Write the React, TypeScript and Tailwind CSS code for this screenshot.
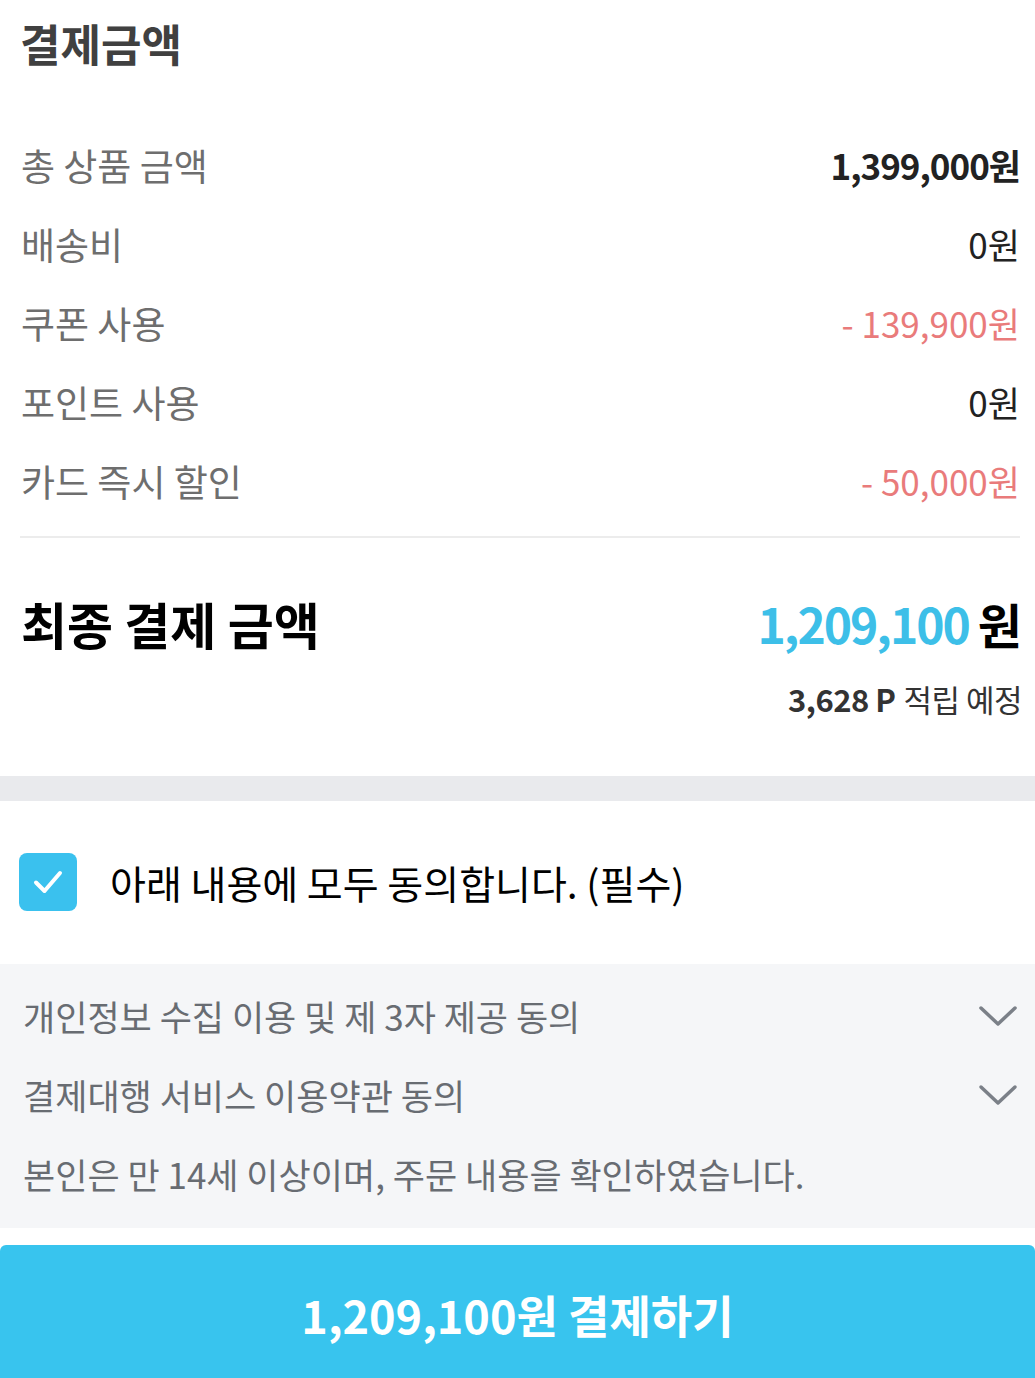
export default function App() {
  const rows: { label: string; value: string; tone: "bold" | "normal" | "red" }[] = [
    { label: "총 상품 금액", value: "1,399,000원", tone: "bold" },
    { label: "배송비", value: "0원", tone: "normal" },
    { label: "쿠폰 사용", value: "- 139,900원", tone: "red" },
    { label: "포인트 사용", value: "0원", tone: "normal" },
    { label: "카드 즉시 할인", value: "- 50,000원", tone: "red" },
  ];

  const agreements = [
    { text: "개인정보 수집 이용 및 제 3자 제공 동의", toggle: true },
    { text: "결제대행 서비스 이용약관 동의", toggle: true },
    { text: "본인은 만 14세 이상이며, 주문 내용을 확인하였습니다.", toggle: false },
  ];

  return (
    <div
      className="w-full bg-white"
      style={{ fontFamily: '"Noto Sans CJK KR", "Noto Sans", sans-serif' }}
    >
      {/* 결제금액 */}
      <section className="pl-[20px] pr-[15px]">
        <h2 className="h-[86px] flex items-center text-[44px] font-bold text-[#404040]">
          결제금액
        </h2>

        <div className="mt-[40px]">
          {rows.map((row) => (
            <div key={row.label} className="h-[79px] flex items-center justify-between">
              <span className="text-[37px] text-[#6e6e6e] pl-[1px]">{row.label}</span>
              <span
                className={
                  row.tone === "bold"
                    ? "text-[35px] font-bold text-[#222] tracking-[-1px]"
                    : row.tone === "red"
                    ? "text-[35px] text-[#e97b7b]"
                    : "text-[35px] text-[#222]"
                }
              >
                {row.value}
              </span>
            </div>
          ))}
        </div>

        <div className="mt-[15px] h-[2px] bg-[#ececec]" />

        <div className="mt-[50px] h-[70px] flex items-center justify-between">
          <span className="text-[50px] font-bold text-black pl-[1px]">최종 결제 금액</span>
          <span className="text-[48px] font-bold tracking-[-2px]">
            <span className="text-[#3dbfe8]">1,209,100</span>
            <span className="text-black"> 원</span>
          </span>
        </div>

        <div className="mt-[21px] -mr-[2px] h-[40px] flex items-center justify-end text-[31px] text-[#333] tracking-[-0.5px]">
          <span className="font-semibold">3,628 P</span>
          <span className="ml-[8px]">적립 예정</span>
        </div>
      </section>

      <div className="mt-[57px] h-[25px] bg-[#e9eaed]" />

      {/* 약관 동의 */}
      <section className="pt-[52px] pb-[52px] px-[19px] flex items-center">
        <div className="w-[58px] h-[58px] rounded-[8px] bg-[#3ac1ee] flex items-center justify-center">
          <svg width="30" height="26" viewBox="0 0 30 26" fill="none">
            <path d="M3 13.5 L11.5 22 L27 4" stroke="white" strokeWidth="4" strokeLinecap="round" strokeLinejoin="round" />
          </svg>
        </div>
        <span className="ml-[33px] text-[39px] text-black">
          아래 내용에 모두 동의합니다. (필수)
        </span>
      </section>

      <section className="bg-[#f5f6f8] py-[13.5px] pl-[23px] pr-[17px]">
        {agreements.map((a) => (
          <div key={a.text} className="h-[79px] flex items-center justify-between">
            <span className="text-[35px] text-[#686c72]">{a.text}</span>
            {a.toggle && (
              <svg width="40" height="24" viewBox="0 0 40 24" fill="none">
                <path d="M3 3 L20 19 L37 3" stroke="#7b8088" strokeWidth="3.5" strokeLinecap="round" strokeLinejoin="round" />
              </svg>
            )}
          </div>
        ))}
      </section>

      <div className="h-[17px] bg-white" />

      <button className="w-full h-[140px] rounded-t-[6px] bg-[#38c4ee] flex items-center justify-center">
        <span className="text-[45px] font-bold text-white">1,209,100원 결제하기</span>
      </button>
    </div>
  );
}
